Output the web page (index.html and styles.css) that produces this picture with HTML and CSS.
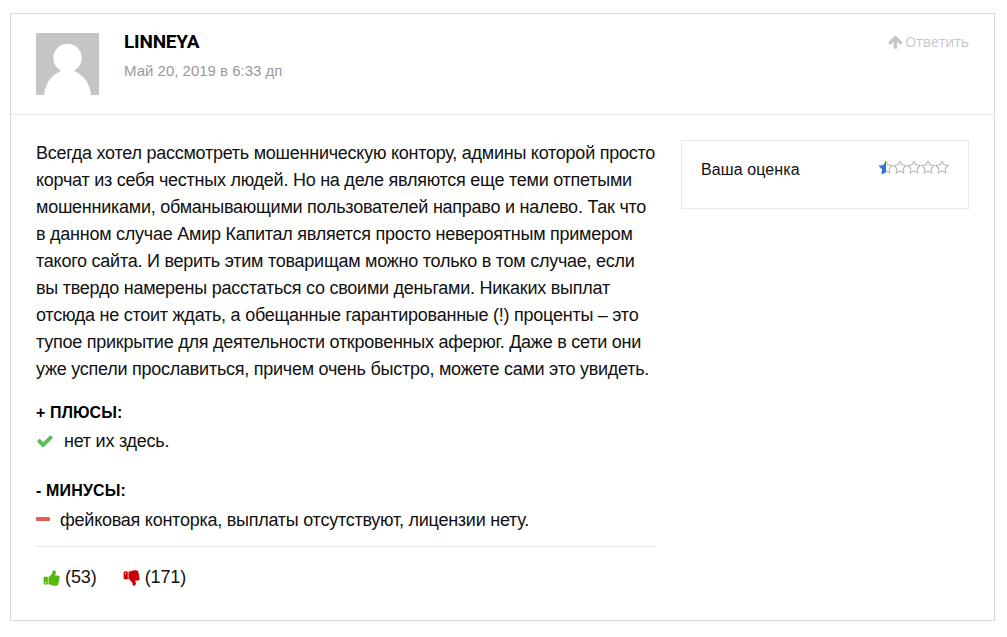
FILE: index.html
```html
<!DOCTYPE html>
<html lang="ru">
<head>
  <meta charset="UTF-8" />
  <title>Отзыв</title>
  <link rel="stylesheet" href="styles.css">
</head>
<body>
  <svg class="sprite">
    <symbol id="star" viewBox="64 128 1664 1664"><path d="M1201 1004l306-297-422-62-189-382-189 382-422 62 306 297-73 421 378-199 377 199zm527-357q0 22-26 48l-363 354 86 500q1 7 1 20 0 50-41 50-19 0-40-12l-449-236-449 236q-22 12-40 12-21 0-31.500-14.500t-10.500-35.500q0-6 2-20l86-500-364-354q-25-27-25-48 0-37 56-46l502-73 225-455q19-41 49-41t49 41l225 455 502 73q56 9 56 46z"/></symbol>
    <symbol id="star-half" viewBox="64 128 1664 1664"><path d="M896 128v1339l-449 236q-22 12-40 12-21 0-31.500-14.500t-10.500-35.500q0-6 2-20l86-500-364-354q-25-27-25-48 0-37 56-46l502-73 225-455q19-41 49-41z"/></symbol>
    <symbol id="thumb" viewBox="0 0 1792 1792"><path d="M320 1344q0-26-19-45t-45-19q-27 0-45.500 19t-18.500 45q0 27 18.500 45.500t45.500 18.500q26 0 45-18.500t19-45.500zm160-512v640q0 26-19 45t-45 19h-288q-26 0-45-19t-19-45v-640q0-26 19-45t45-19h288q26 0 45 19t19 45zm1184 0q0 86-55 149 15 44 15 76 3 76-43 137 17 56 0 117-15 57-54 94 9 112-49 181-64 76-197 78h-129q-66 0-144-15.500t-121.500-29-120.500-39.500q-123-43-158-44-26-1-45-19.500t-19-44.500v-641q0-25 18-43.500t43-20.500q24-2 76-59t101-121q68-87 101-120 18-18 31-48t17.500-48.500 13.500-60.500q7-39 12.500-61t19.500-52 34-50q19-19 45-19 46 0 82.500 10.500t60 26 40 40.500 24 45 12 50 5 45 .5 39q0 38-9.500 76t-19 60-27.500 56q-3 6-10 18t-11 22-8 24h277q78 0 135 57t57 135z"/></symbol>
  </svg>

  <article class="review">
    <header class="review-head">
      <svg class="avatar" viewBox="0 0 63 62">
        <rect width="63" height="62" fill="#c5c5c5"/>
        <circle cx="31.500" cy="25" r="14.200" fill="#fff"/>
        <path d="M8 62C9 52 14 43 23 39q3-1.500 1-4h15q-2 2.500 1 4C49 43 54 52 55 62z" fill="#fff"/>
      </svg>
      <div class="author">
        <div class="name">LINNEYA</div>
        <div class="date">Май 20, 2019 в 6:33 дп</div>
      </div>
      <a class="reply">
        <svg class="arrow" viewBox="0 0 1792 1792"><path d="M1611 971q0 51-37 90l-75 75q-38 38-91 38-54 0-90-38l-294-293v704q0 52-37.500 84.500t-90.500 32.500h-128q-53 0-90.500-32.500t-37.500-84.500v-704l-294 293q-36 38-90 38t-90-38l-75-75q-38-38-38-90 0-53 38-91l651-651q35-37 90-37 54 0 91 37l651 651q37 39 37 91z"/></svg>
        <span>Ответить</span>
      </a>
    </header>

    <div class="review-body">
      <div class="content">
        <p class="text">Всегда хотел рассмотреть мошенническую контору, админы которой просто<br>
          корчат из себя честных людей. Но на деле являются еще теми отпетыми<br>
          мошенниками, обманывающими пользователей направо и налево. Так что<br>
          в данном случае Амир Капитал является просто невероятным примером<br>
          такого сайта. И верить этим товарищам можно только в том случае, если<br>
          вы твердо намерены расстаться со своими деньгами. Никаких выплат<br>
          отсюда не стоит ждать, а обещанные гарантированные (!) проценты – это<br>
          тупое прикрытие для деятельности откровенных аферюг. Даже в сети они<br>
          уже успели прославиться, причем очень быстро, можете сами это увидеть.</p>

        <div class="title">+ ПЛЮСЫ:</div>
        <div class="item pros">
          <svg class="check" viewBox="0 0 1792 1792"><path d="M1671 566q0 40-28 68l-724 724-136 136q-28 28-68 28t-68-28l-136-136-362-362q-28-28-28-68t28-68l136-136q28-28 68-28t68 28l294 295 656-657q28-28 68-28t68 28l136 136q28 28 28 68z"/></svg>
          <span>нет их здесь.</span>
        </div>

        <div class="title">- МИНУСЫ:</div>
        <div class="item cons">
          <i class="minus"></i>
          <span>фейковая конторка, выплаты отсутствуют, лицензии нету.</span>
        </div>

        <div class="votes">
          <span class="vote up"><svg><use href="#thumb"/></svg>(53)</span>
          <span class="vote down"><svg><use href="#thumb"/></svg>(171)</span>
        </div>
      </div>

      <aside class="rating">
        <span>Ваша оценка</span>
        <div class="stars">
          <svg><use href="#star"/><use class="half" href="#star-half"/></svg>
          <svg><use href="#star"/></svg>
          <svg><use href="#star"/></svg>
          <svg><use href="#star"/></svg>
          <svg><use href="#star"/></svg>
        </div>
      </aside>
    </div>
  </article>
</body>
</html>
```
FILE: styles.css
```css
* { box-sizing: border-box; }
body { margin: 0; padding: 13px 12px 0 10px; background: #fff; color: #111; font: 18px/27px "Liberation Sans", Arial, sans-serif; }
svg { display: block; fill: currentColor; }
.sprite { display: none; }

.review { height: 608px; border: 1px solid #d9d9d9; }
.review-head { display: flex; height: 101px; padding: 19px 25px 0; border-bottom: 1px solid #e8e8e8; }
.avatar { width: 63px; height: 62px; margin-right: 25px; }
.author { flex: 1; }
.name { color: #000; font: bold 19px/18px Roboto, sans-serif; letter-spacing: -0.2px; }
.date { margin-top: 10px; color: #999; font-size: 15px; line-height: 20px; }
.reply { display: flex; height: 18px; align-items: center; gap: 1px; color: #c6c6c6; font: 14px/18px "Open Sans", sans-serif; }
.arrow { width: 16px; height: 16px; }

.review-body { display: flex; align-items: flex-start; justify-content: space-between; padding: 25px 25px 0; }
.content { width: 620px; }
.text { margin: 0 0 16px; letter-spacing: -0.25px; white-space: nowrap; }
.title { color: #000; font-size: 16px; font-weight: bold; line-height: 27px; letter-spacing: 0.15px; }
.item { display: flex; align-items: center; height: 27px; margin-top: 2px; letter-spacing: -0.25px; }
.pros { margin-bottom: 22px; }
.cons { margin-top: 3px; }
.check { width: 18px; height: 18px; margin: -2px 10px 0 0; color: #5abf54; }
.minus { width: 14px; height: 4px; margin: -3px 10px 0 0; border-radius: 1px; background: #e65b5b; }

.votes { display: flex; gap: 26px; margin-top: 12px; padding: 17px 7px 0; border-top: 1px solid #e8e8e8; letter-spacing: -0.1px; }
.vote { display: flex; align-items: center; gap: 4px; }
.vote svg { width: 18px; height: 18px; }
.up svg { color: #57b90b; }
.down svg { color: #cb0000; transform: scaleY(-1); }

.rating { display: flex; justify-content: space-between; width: 288px; height: 69px; padding: 15px 19px; border: 1px solid #e9e9e9; font-size: 16px; letter-spacing: 0.1px; }
.stars { display: flex; margin-top: 5px; color: #b8b8b8; }
.stars svg { width: 14px; height: 14px; }
.half { color: #2f75d8; }
```
